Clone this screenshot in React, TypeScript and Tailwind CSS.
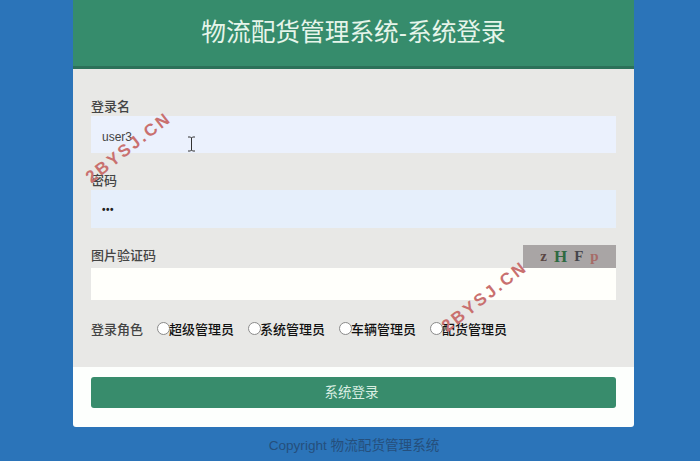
const cjk = "font-['Liberation_Sans','Noto_Sans_CJK_SC',sans-serif]";

function Mark({ className }: { className: string }) {
  return (
    <span className={`absolute font-['Liberation_Sans',sans-serif] text-[17px] font-bold tracking-[2.5px] text-[#c9706f] -rotate-[38deg] whitespace-nowrap leading-none ${className}`}>
      2BYSJ.CN
    </span>
  );
}

function Role({ label }: { label: string }) {
  return (
    <label className="flex items-center">
      <span className="w-[13px] h-[13px] rounded-full bg-white border border-[#8a8a8a] mr-[-1px] -mt-[2px]" />
      <span className="text-[13px] text-[#111] font-medium leading-none">{label}</span>
    </label>
  );
}

export default function App() {
  return (
    <div className={`relative w-[700px] h-[461px] overflow-hidden bg-[#2b74b9] ${cjk}`}>
      <div className="ml-[73px] w-[561px] h-[427px] flex flex-col rounded-b-[3px] overflow-hidden">
        <div className="h-[69px] shrink-0 bg-[#368c6c] border-b-[3px] border-[#2c7159] flex items-center justify-center">
          <h1 className="text-[24.7px] leading-none text-[#e6f5ea] font-normal">物流配货管理系统-系统登录</h1>
        </div>
        <div className="h-[298px] shrink-0 bg-[#e8e8e6] px-[18px] pt-[30px] flex flex-col">
          <div className="text-[13px] leading-[15px] text-[#444] font-medium h-[17px]">登录名</div>
          <div className="h-[37px] bg-[#ebf1fd] pl-[11px] pt-[5px] flex items-center text-[12px] text-[#444] font-['Liberation_Sans',sans-serif]">user3</div>
          <div className="text-[13px] leading-[15px] text-[#444] font-medium h-[17px] mt-[20px]">密码</div>
          <div className="h-[38px] bg-[#e6effb] pl-[11px] flex items-center text-[10px] tracking-[0.5px] text-[#222] font-bold font-['Liberation_Sans',sans-serif]">•••</div>
          <div className="flex items-end justify-between mt-[17px] h-[23px]">
            <div className="text-[13px] leading-[15px] text-[#444] font-medium pb-[5px]">图片验证码</div>
            <div className="w-[93px] h-[23px] bg-[#a9a5a5] flex items-center justify-center gap-[7px] font-['Liberation_Serif',serif] text-[15px] font-bold leading-none">
              <span className="text-[#5a4644]">z</span>
              <span className="text-[#2f6a41] text-[17px]">H</span>
              <span className="text-[#45454c]">F</span>
              <span className="text-[#a66b68]">p</span>
            </div>
          </div>
          <div className="h-[32px] bg-[#fffffb]" />
          <div className="flex items-center mt-[21px] h-[17px]">
            <span className="text-[13px] leading-[17px] text-[#444] font-medium w-[66px]">登录角色</span>
            <div className="flex gap-[14px]">
              <Role label="超级管理员" />
              <Role label="系统管理员" />
              <Role label="车辆管理员" />
              <Role label="配货管理员" />
            </div>
          </div>
        </div>
        <div className="flex-1 bg-[#fdfffd] px-[18px] pt-[10px]">
          <button className="w-full h-[31px] rounded-[3px] bg-[#388c6c] text-[#d9eee2] text-[13.5px] pt-[2px] pr-[4px]">系统登录</button>
        </div>
      </div>
      <p className="text-center pl-[8px] mt-[11px] text-[13.6px] leading-[16px] text-[#254f7c]">Copyright 物流配货管理系统</p>
      <Mark className="left-[77px] top-[139px]" />
      <Mark className="left-[433px] top-[288px]" />
      <svg className="absolute left-[187px] top-[136px]" width="9" height="16" viewBox="0 0 9 16" fill="none" stroke="#333" strokeWidth="1">
        <path d="M1 1h2.500l1 1 1-1H8M4.500 2v12M1 15h2.500l1-1 1 1H8" />
      </svg>
    </div>
  );
}
